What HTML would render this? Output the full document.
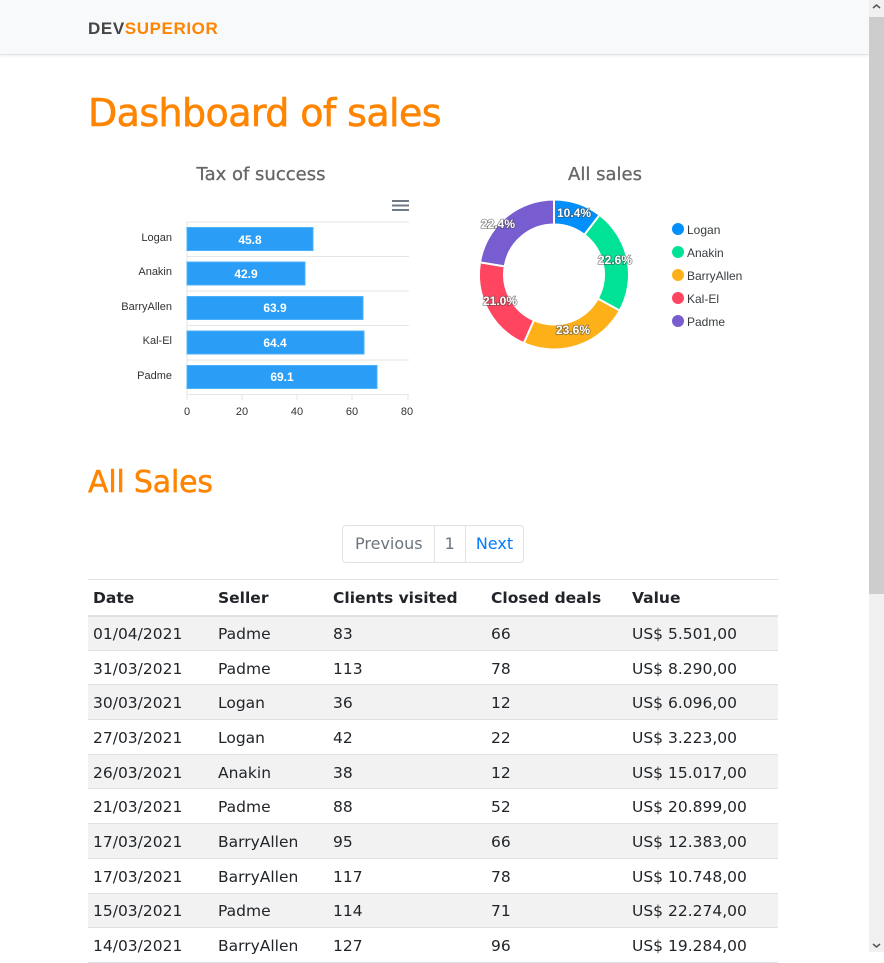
<!DOCTYPE html>
<html><head><meta charset="utf-8"><style>
*{box-sizing:border-box;margin:0;padding:0}
body{width:884px;height:952px;overflow:hidden;background:#fff;font-family:"Liberation Sans","DejaVu Sans",sans-serif;position:relative;color:#212529}
.nav{position:absolute;left:0;top:0;width:869px;height:55px;background:#f8f9fa;border-bottom:1px solid #e2e3e5;box-shadow:0 1px 3px rgba(0,0,0,.08)}
.logo{position:absolute;left:88px;top:19px;font-weight:bold;font-size:17px;letter-spacing:0.6px;font-family:"Liberation Sans",sans-serif;}
h1{position:absolute;left:88px;top:91px;color:#ff8400;font-size:38px;font-weight:normal;font-family:"DejaVu Sans",sans-serif;letter-spacing:-0.6px;-webkit-text-stroke:0.6px #ff8400}
h2{position:absolute;left:88px;top:465px;color:#ff8400;font-size:30px;font-weight:normal;font-family:"DejaVu Sans",sans-serif;letter-spacing:-0.2px;-webkit-text-stroke:0.5px #ff8400}
.sb{position:absolute;left:869px;top:0;width:15px;height:952px;background:#f0f0f0}
.thumb{position:absolute;left:869px;top:17px;width:15px;height:577px;background:#cdcdcd}
.pag{position:absolute;left:342px;top:525px;height:38px;border:1px solid #dee2e6;border-radius:4px;display:flex;font-size:16px;font-family:"DejaVu Sans",sans-serif}
.pag div{padding:0 10px;line-height:36px;border-left:1px solid #dee2e6}
.pag div:first-child{border-left:none;color:#6c757d;padding:0 11px 0 12px}
table{position:absolute;left:88px;top:579px;width:690px;border-collapse:collapse;font-size:15.5px;font-family:"DejaVu Sans",sans-serif}
th{text-align:left;height:36px;border-top:1px solid #dee2e6;border-bottom:2px solid #dee2e6;padding-left:5px;font-weight:bold;padding-top:2px}
td{height:34.7px;border-bottom:1px solid #dee2e6;padding-left:5px;padding-top:2px}
tbody tr:nth-child(odd){background:#f2f2f2}
.lbl text{paint-order:stroke;stroke:#444;stroke-width:1.6px;stroke-opacity:.6}
</style></head><body>
<div class="nav"><div class="logo"><span style="color:#444">DEV</span><span style="color:#ff8400">SUPERIOR</span></div></div>
<h1>Dashboard of sales</h1>
<svg style="position:absolute;left:0;top:0" width="869" height="440" font-family="Liberation Sans,sans-serif">
<text x="261" y="180" text-anchor="middle" font-size="18" fill="#666" font-family="DejaVu Sans,sans-serif" stroke="#666" stroke-width="0.3">Tax of success</text>
<text x="605" y="180" text-anchor="middle" font-size="18" fill="#666" font-family="DejaVu Sans,sans-serif" stroke="#666" stroke-width="0.3">All sales</text>
<g stroke="#6e7a86" stroke-width="2"><line x1="392" y1="201" x2="409" y2="201"/><line x1="392" y1="205.5" x2="409" y2="205.5"/><line x1="392" y1="210" x2="409" y2="210"/></g>
<g stroke="#e6e6e6" stroke-width="1"><line x1="187" y1="222" x2="409" y2="222"/><line x1="187" y1="256.5" x2="409" y2="256.5"/><line x1="187" y1="291" x2="409" y2="291"/><line x1="187" y1="325.5" x2="409" y2="325.5"/><line x1="187" y1="360" x2="409" y2="360"/><line x1="187" y1="394.5" x2="409" y2="394.5"/><line x1="187" y1="222" x2="187" y2="394"/>
<line x1="187" y1="394" x2="187" y2="400"/><line x1="242" y1="394" x2="242" y2="400"/><line x1="297" y1="394" x2="297" y2="400"/><line x1="352" y1="394" x2="352" y2="400"/><line x1="408" y1="394" x2="408" y2="400"/></g>
<g fill="#2a9ef7" stroke="#4db0fa" stroke-width="1"><rect x="187" y="227.5" width="126" height="23"/><rect x="187" y="262" width="118" height="23"/><rect x="187" y="296.5" width="176" height="23"/><rect x="187" y="331" width="177" height="23"/><rect x="187" y="365.5" width="190" height="23"/></g>
<g fill="#fff" font-size="12" font-weight="bold" text-anchor="middle"><text x="250" y="244">45.8</text><text x="246" y="278">42.9</text><text x="275" y="312">63.9</text><text x="275" y="347">64.4</text><text x="282" y="381">69.1</text></g>
<g fill="#333" font-size="11" text-anchor="end"><text x="172" y="241">Logan</text><text x="172" y="275">Anakin</text><text x="172" y="310">BarryAllen</text><text x="172" y="344">Kal-El</text><text x="172" y="379">Padme</text></g>
<g fill="#333" font-size="11" text-anchor="middle"><text x="187" y="415">0</text><text x="242" y="415">20</text><text x="297" y="415">40</text><text x="352" y="415">60</text><text x="407" y="415">80</text></g>
<g stroke="#fff" stroke-width="2">
<path fill="#008ffb" d="M554 199.5A75 75 0 0 1 599.6 214.96L584.4 234.8A50 50 0 0 0 554 224.5Z"/>
<path fill="#00e396" d="M599.6 214.96A75 75 0 0 1 619.72 310.64L597.8 298.6A50 50 0 0 0 584.4 234.8Z"/>
<path fill="#feb019" d="M619.72 310.64A75 75 0 0 1 523.78 343.14L533.86 320.26A50 50 0 0 0 597.8 298.6Z"/>
<path fill="#ff4560" d="M523.78 343.14A75 75 0 0 1 480 262.3L504.67 266.37A50 50 0 0 0 533.86 320.26Z"/>
<path fill="#775dd0" d="M480 262.3A75 75 0 0 1 554 199.5L554 224.5A50 50 0 0 0 504.67 266.37Z"/>
</g>
<g class="lbl" fill="#fff" font-size="12" font-weight="bold" text-anchor="middle"><text x="574" y="217">10.4%</text><text x="615" y="264">22.6%</text><text x="573" y="334">23.6%</text><text x="500" y="305">21.0%</text><text x="498" y="228">22.4%</text></g>
<g font-size="12" fill="#373d3f"><circle cx="678" cy="229" r="6" fill="#008ffb"/><text x="687" y="234">Logan</text>
<circle cx="678" cy="252" r="6" fill="#00e396"/><text x="687" y="257">Anakin</text>
<circle cx="678" cy="275" r="6" fill="#feb019"/><text x="687" y="280">BarryAllen</text>
<circle cx="678" cy="298" r="6" fill="#ff4560"/><text x="687" y="303">Kal-El</text>
<circle cx="678" cy="321" r="6" fill="#775dd0"/><text x="687" y="326">Padme</text></g>
</svg>
<h2>All Sales</h2>
<div class="pag"><div>Previous</div><div style="color:#6c757d">1</div><div style="color:#007bff">Next</div></div>
<table><thead><tr><th style="width:125px">Date</th><th style="width:115px">Seller</th><th style="width:158px">Clients visited</th><th style="width:141px">Closed deals</th><th>Value</th></tr></thead>
<tbody>
<tr><td>01/04/2021</td><td>Padme</td><td>83</td><td>66</td><td>US$ 5.501,00</td></tr>
<tr><td>31/03/2021</td><td>Padme</td><td>113</td><td>78</td><td>US$ 8.290,00</td></tr>
<tr><td>30/03/2021</td><td>Logan</td><td>36</td><td>12</td><td>US$ 6.096,00</td></tr>
<tr><td>27/03/2021</td><td>Logan</td><td>42</td><td>22</td><td>US$ 3.223,00</td></tr>
<tr><td>26/03/2021</td><td>Anakin</td><td>38</td><td>12</td><td>US$ 15.017,00</td></tr>
<tr><td>21/03/2021</td><td>Padme</td><td>88</td><td>52</td><td>US$ 20.899,00</td></tr>
<tr><td>17/03/2021</td><td>BarryAllen</td><td>95</td><td>66</td><td>US$ 12.383,00</td></tr>
<tr><td>17/03/2021</td><td>BarryAllen</td><td>117</td><td>78</td><td>US$ 10.748,00</td></tr>
<tr><td>15/03/2021</td><td>Padme</td><td>114</td><td>71</td><td>US$ 22.274,00</td></tr>
<tr><td>14/03/2021</td><td>BarryAllen</td><td>127</td><td>96</td><td>US$ 19.284,00</td></tr>
</tbody></table>
<div class="sb"></div><div class="thumb"></div>
<svg style="position:absolute;left:869px;top:0" width="15" height="952"><path d="M4 8L7.5 5L11 8" stroke="#555" stroke-width="1.5" fill="none"/><path d="M4 944L7.5 947L11 944" stroke="#555" stroke-width="1.5" fill="none"/></svg>
</body></html>
